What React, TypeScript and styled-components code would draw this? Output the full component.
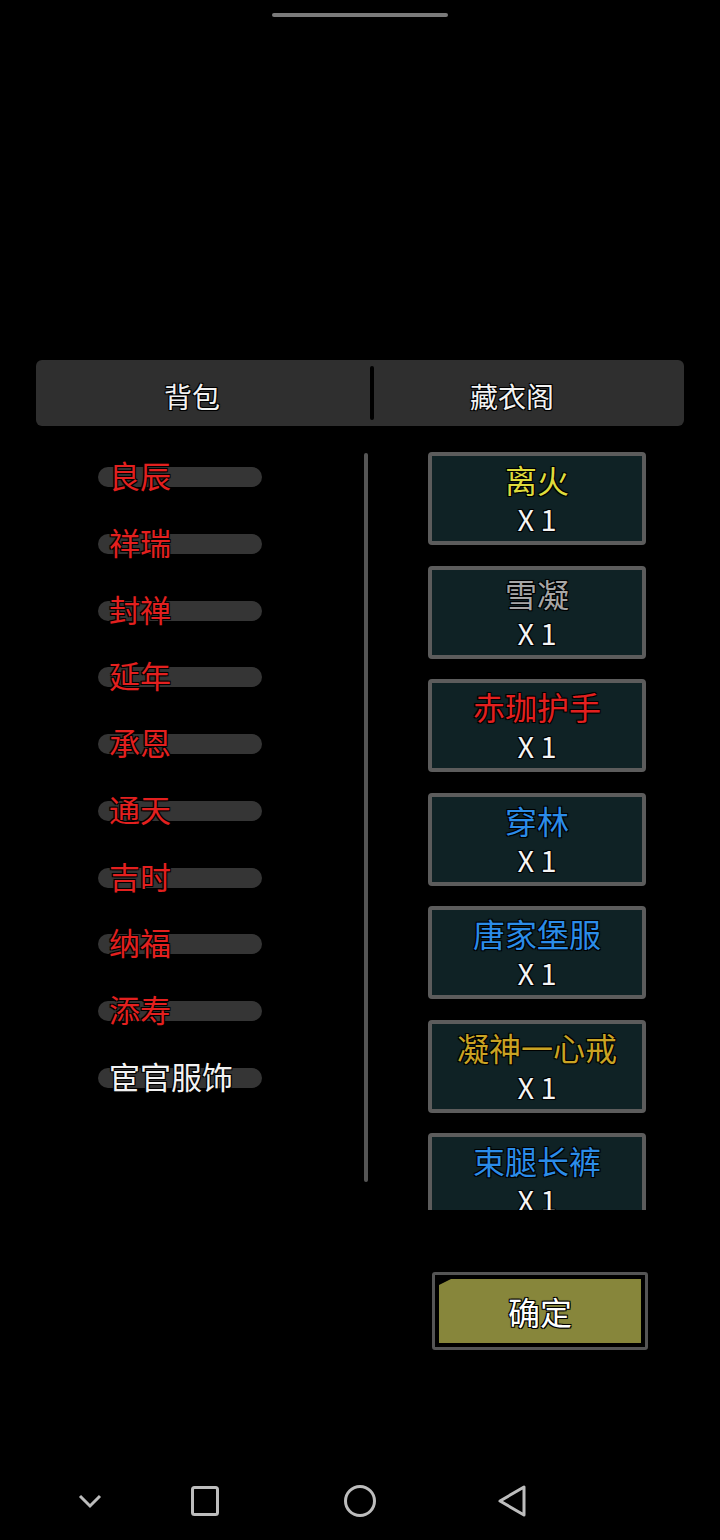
import React from "react";
import styled, { createGlobalStyle } from "styled-components";

const GlobalStyle = createGlobalStyle`
  html, body {
    margin: 0;
    padding: 0;
    background: #000;
  }
  body {
    font-family: "Noto Sans CJK SC", "Noto Sans", sans-serif;
  }
`;

const outline = `
  text-shadow:
    -1px -1px 0 #000,
    1px -1px 0 #000,
    -1px 1px 0 #000,
    1px 1px 0 #000,
    0 0 2px #000;
`;

const Page = styled.div`
  width: 720px;
  height: 1540px;
  background: #000;
  display: flex;
  flex-direction: column;
  overflow: hidden;
`;

const HandleRow = styled.div`
  display: flex;
  justify-content: center;
  padding-top: 13px;
`;

const Handle = styled.div`
  width: 176px;
  height: 4px;
  border-radius: 2px;
  background: #7a7a7a;
`;

const TabBar = styled.div`
  margin: 343px 36px 0;
  height: 66px;
  background: #2f2f2f;
  border-radius: 6px;
  display: flex;
  align-items: center;
`;

const Tab = styled.div<{ $width: number; $shift: number }>`
  box-sizing: border-box;
  flex: none;
  width: ${(p) => p.$width}px;
  height: 100%;
  display: flex;
  align-items: center;
  justify-content: center;
  padding: 6px ${(p) => p.$shift}px 0 0;
  color: #f2f2f2;
  font-size: 28px;
  ${outline}
`;

const TabDivider = styled.div`
  flex: none;
  width: 4px;
  height: 54px;
  border-radius: 2px;
  background: #000;
`;

const Main = styled.div`
  margin-top: 26px;
  height: 758px;
  display: flex;
`;

const StatusList = styled.div`
  width: 266px;
  padding-left: 98px;
  display: flex;
  flex-direction: column;
  gap: 16.78px;
`;

const StatusRow = styled.div`
  height: 50px;
  display: grid;
  align-items: center;
`;

const Pill = styled.div`
  grid-area: 1 / 1;
  width: 164px;
  height: 20px;
  border-radius: 10px;
  background: #353535;
`;

const StatusName = styled.span<{ $color: string }>`
  grid-area: 1 / 1;
  padding: 0 0 4px 11px;
  font-size: 31px;
  line-height: 36px;
  color: ${(p) => p.$color};
  white-space: nowrap;
  ${outline}
`;

const ScrollTrack = styled.div`
  margin-top: 1px;
  width: 4px;
  height: 729px;
  border-radius: 2px;
  background: #555;
`;

const CardList = styled.div`
  margin-left: 60px;
  width: 218px;
  height: 758px;
  overflow: hidden;
  display: flex;
  flex-direction: column;
  gap: 20.5px;
`;

const Card = styled.div`
  flex: none;
  box-sizing: border-box;
  height: 93px;
  border: 4px solid #5c5c5c;
  border-radius: 4px;
  background: #0f2225;
  padding: 5px 0 6px;
  display: flex;
  flex-direction: column;
  align-items: center;
  gap: 5px;
`;

const ItemName = styled.div<{ $color: string }>`
  font-size: 32px;
  line-height: 36px;
  color: ${(p) => p.$color};
  white-space: nowrap;
  ${outline}
`;

const ItemCount = styled.div`
  font-size: 29px;
  line-height: 32px;
  color: #f4f4f4;
  ${outline}
`;

const ConfirmRow = styled.div`
  margin-top: 62px;
  padding-left: 432px;
`;

const ConfirmFrame = styled.div`
  box-sizing: border-box;
  width: 216px;
  height: 78px;
  border: 3px solid #555;
  border-radius: 3px;
  padding: 4px;
  background: #000;
`;

const ConfirmButton = styled.button`
  width: 100%;
  height: 100%;
  border: none;
  padding: 0;
  background: #87863b;
  clip-path: polygon(12px 0, 100% 0, 100% 100%, 0 100%, 0 6px);
  color: #fff;
  font-family: inherit;
  font-size: 32px;
  display: flex;
  align-items: center;
  justify-content: center;
  ${outline}
`;

const NavBar = styled.div`
  margin-top: 135px;
  padding-left: 78px;
  display: flex;
  align-items: center;
  height: 32px;
`;

const NavIcon = styled.svg<{ $gap: number }>`
  flex: none;
  margin-left: ${(p) => p.$gap}px;
  stroke: #bdbdbd;
  stroke-width: 3;
  fill: none;
`;

const statuses = [
  { name: "良辰", color: "#e3201f" },
  { name: "祥瑞", color: "#e3201f" },
  { name: "封禅", color: "#e3201f" },
  { name: "延年", color: "#e3201f" },
  { name: "承恩", color: "#e3201f" },
  { name: "通天", color: "#e3201f" },
  { name: "吉时", color: "#e3201f" },
  { name: "纳福", color: "#e3201f" },
  { name: "添寿", color: "#e3201f" },
  { name: "宦官服饰", color: "#f2f2f2" },
];

const items = [
  { name: "离火", color: "#dedb3c" },
  { name: "雪凝", color: "#a6a6a6" },
  { name: "赤珈护手", color: "#e3201f" },
  { name: "穿林", color: "#2b8ce8" },
  { name: "唐家堡服", color: "#2b8ce8" },
  { name: "凝神一心戒", color: "#c9a323" },
  { name: "束腿长裤", color: "#2b8ce8" },
];

export default function App() {
  return (
    <Page>
      <GlobalStyle />
      <HandleRow>
        <Handle />
      </HandleRow>

      <TabBar>
        <Tab $width={334} $shift={22}>背包</Tab>
        <TabDivider />
        <Tab $width={310} $shift={34}>藏衣阁</Tab>
      </TabBar>

      <Main>
        <StatusList>
          {statuses.map((s) => (
            <StatusRow key={s.name}>
              <Pill />
              <StatusName $color={s.color}>{s.name}</StatusName>
            </StatusRow>
          ))}
        </StatusList>
        <ScrollTrack />
        <CardList>
          {items.map((it) => (
            <Card key={it.name}>
              <ItemName $color={it.color}>{it.name}</ItemName>
              <ItemCount>X 1</ItemCount>
            </Card>
          ))}
        </CardList>
      </Main>

      <ConfirmRow>
        <ConfirmFrame>
          <ConfirmButton>确定</ConfirmButton>
        </ConfirmFrame>
      </ConfirmRow>

      <NavBar>
        <NavIcon $gap={0} width="24" height="16" viewBox="0 0 24 16">
          <polyline points="2,3 12,13 22,3" />
        </NavIcon>
        <NavIcon $gap={89} width="28" height="30" viewBox="0 0 28 30">
          <rect x="1.5" y="1.5" width="25" height="27" rx="2" />
        </NavIcon>
        <NavIcon $gap={125} width="32" height="32" viewBox="0 0 32 32">
          <circle cx="16" cy="16" r="14.5" />
        </NavIcon>
        <NavIcon $gap={122} width="28" height="32" viewBox="0 0 28 32">
          <path d="M26 2 L26 30 L2 16 Z" strokeLinejoin="round" />
        </NavIcon>
      </NavBar>
    </Page>
  );
}
